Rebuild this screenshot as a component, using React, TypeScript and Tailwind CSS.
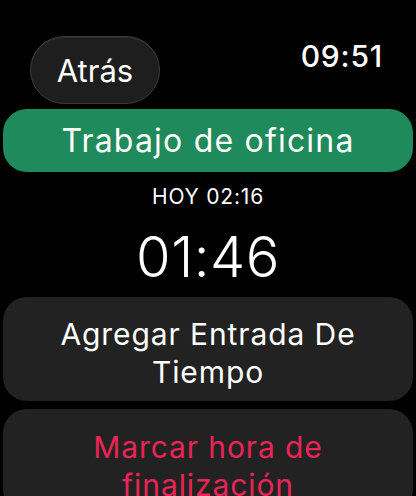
const App = () => {
    return (
        <div className="w-[416px] h-[496px] overflow-hidden bg-black text-white font-['Inter','Noto_Sans',sans-serif]">
            {/* Top bar: back pill + clock */}
            <div className="flex items-start justify-between pt-[36px] pl-[30px] pr-[33px]">
                <button className="h-[68px] w-[130px] rounded-full bg-[#1e1e1e] border border-[#3a3a3a] shadow-[inset_0_1px_0_rgba(255,255,255,0.08)] flex items-center justify-center text-[31px] leading-none text-white">
                    Atrás
                </button>
                <span className="mt-[2px] text-[30px] font-medium leading-[36px] tracking-[0.8px]">09:51</span>
            </div>

            {/* Project name */}
            <div className="mx-[3px] mt-[5px] h-[63px] rounded-[24px] bg-[#1f8a5b] flex items-center justify-center text-[32px] leading-none tracking-[1.2px]">
                Trabajo de oficina
            </div>

            <div className="mt-[12px] text-center text-[21px] leading-[26px] tracking-[0.8px]">HOY 02:16</div>
            <div className="mt-[16px] text-center text-[56px] font-light leading-[62px] tracking-[0.5px]">01:46</div>

            {/* Actions */}
            <div className="mx-[3px] mt-[9px] flex flex-col gap-[8px]">
                <button className="h-[104px] rounded-[24px] bg-[#222222] px-4 pt-[18px] flex items-start justify-center text-center text-[30px] leading-[38px] tracking-[0.9px] text-white">
                    Agregar Entrada De Tiempo
                </button>
                <button className="h-[104px] rounded-[24px] bg-[#222222] px-10 pt-[19px] flex items-start justify-center text-center text-[30px] leading-[38px] tracking-[0.9px] text-[#ea2457]">
                    Marcar hora de finalización
                </button>
            </div>
        </div>
    );
};

export default App;
